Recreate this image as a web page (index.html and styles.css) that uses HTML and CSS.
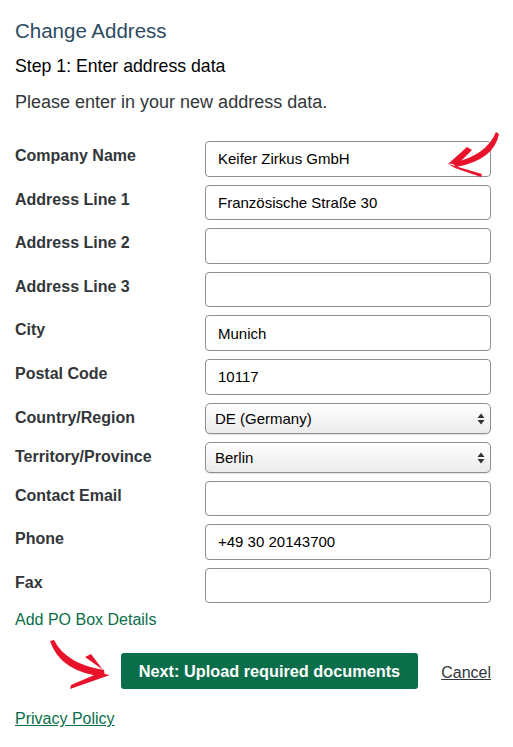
FILE: index.html
```html
<!DOCTYPE html>
<html lang="en">
<head>
    <meta charset="UTF-8">
    <meta name="viewport" content="width=device-width, initial-scale=1.0">
    <title>Change Address</title>
    <link rel="stylesheet" href="styles.css">
</head>
<body>
<div class="page">

    <h1 class="title">Change Address</h1>
    <p class="step">Step 1: Enter address data</p>
    <p class="intro">Please enter in your new address data.</p>

    <!-- Address form -->
    <form class="address-form">
        <label class="field-label" for="company">Company Name</label>
        <input class="text-input" id="company" type="text" value="Keifer Zirkus GmbH">

        <label class="field-label" for="line1">Address Line 1</label>
        <input class="text-input" id="line1" type="text" value="Französische Straße 30">

        <label class="field-label" for="line2">Address Line 2</label>
        <input class="text-input" id="line2" type="text">

        <label class="field-label" for="line3">Address Line 3</label>
        <input class="text-input" id="line3" type="text">

        <label class="field-label" for="city">City</label>
        <input class="text-input" id="city" type="text" value="Munich">

        <label class="field-label" for="postal">Postal Code</label>
        <input class="text-input" id="postal" type="text" value="10117">

        <label class="field-label" for="country">Country/Region</label>
        <div class="select-wrap">
            <select class="select-input" id="country">
                <option>DE (Germany)</option>
            </select>
            <svg class="select-arrows" width="8" height="12" viewBox="0 0 8 12">
                <path d="M4 0.5 L7.5 5 L0.5 5 Z M4 11.5 L7.5 7 L0.5 7 Z" fill="#333"/>
            </svg>
        </div>

        <label class="field-label" for="territory">Territory/Province</label>
        <div class="select-wrap">
            <select class="select-input" id="territory">
                <option>Berlin</option>
            </select>
            <svg class="select-arrows" width="8" height="12" viewBox="0 0 8 12">
                <path d="M4 0.5 L7.5 5 L0.5 5 Z M4 11.5 L7.5 7 L0.5 7 Z" fill="#333"/>
            </svg>
        </div>

        <label class="field-label" for="email">Contact Email</label>
        <input class="text-input" id="email" type="text">

        <label class="field-label" for="phone">Phone</label>
        <input class="text-input" id="phone" type="text" value="+49 30 20143700">

        <label class="field-label" for="fax">Fax</label>
        <input class="text-input" id="fax" type="text">
    </form>

    <a class="link po-link" href="#">Add PO Box Details</a>

    <div class="actions">
        <button class="btn-next" type="button">Next: Upload required documents</button>
        <a class="cancel-link" href="#">Cancel</a>
    </div>

    <a class="link privacy-link" href="#">Privacy Policy</a>

    <!-- Red hand-drawn arrows (annotation overlay) -->
    <svg class="annotations" width="513" height="747" viewBox="0 0 513 747">
        <g fill="#e8132b">
            <path d="M496,132 L499,134 Q494,160 456,167 L452,163 Q486,156 496,132 Z"/>
            <path d="M448,164 L467,147 L472,150 L459,163 Z"/>
            <path d="M448,164 L482,174 L481,177 L455,168 Z"/>

            <path d="M50,641 L54,640 Q66,664 104,670 L105,677 Q60,672 50,641 Z"/>
            <path d="M110,675 L85,657 L91,654 L103,670 Z"/>
            <path d="M110,675 L70,689 L71,685 L99,673 Z"/>
        </g>
    </svg>
</div>
</body>
</html>
```

FILE: styles.css
```css
body {
    margin: 0;
    padding: 0;
    background-color: #fff;
    font-family: "Liberation Sans", Arial, sans-serif;
    color: #32363a;
}

.page {
    position: relative;
    padding: 1px 22px 0 15px;
}

.title {
    margin: 18px 0 0;
    font-size: 20.5px;
    line-height: 24px;
    font-weight: normal;
    color: #2b4b62;
}

.step {
    margin: 12px 0 0;
    font-size: 17.7px;
    line-height: 22px;
    color: #000;
}

.intro {
    margin: 14px 0 0;
    font-size: 18px;
    line-height: 22px;
    color: #32363a;
}

.address-form {
    display: grid;
    grid-template-columns: 190px 1fr;
    row-gap: 8px;
    margin-top: 28px;
}

.field-label {
    padding-top: 5px;
    font-size: 16px;
    line-height: 20px;
    font-weight: bold;
    color: #32363a;
}

.text-input {
    box-sizing: border-box;
    width: 100%;
    height: 35.6px;
    margin: 0;
    padding: 0 12px;
    border: 1px solid #8f8f8f;
    border-radius: 4px;
    font-family: "Liberation Sans", Arial, sans-serif;
    font-size: 15px;
    color: #000;
    background-color: #fff;
}

.select-wrap {
    position: relative;
}

.select-input {
    box-sizing: border-box;
    width: 100%;
    height: 31px;
    margin: 0;
    padding: 0 9px;
    border: 1px solid #8f8f8f;
    border-radius: 5px;
    appearance: none;
    -webkit-appearance: none;
    background: linear-gradient(#ffffff, #ebebeb);
    box-shadow: 0 1px 1px rgba(0, 0, 0, 0.12);
    font-family: "Liberation Sans", Arial, sans-serif;
    font-size: 15px;
    color: #000;
}

.select-arrows {
    position: absolute;
    right: 6px;
    top: 10px;
    pointer-events: none;
}

.link {
    display: block;
    width: max-content;
    font-size: 16px;
    line-height: 20px;
    color: #0a6e4a;
}

.po-link {
    margin-top: 7px;
    text-decoration: none;
}

.actions {
    display: flex;
    justify-content: flex-end;
    align-items: center;
    gap: 23px;
    margin-top: 23px;
}

.btn-next {
    height: 36px;
    padding: 0 18px;
    border: none;
    border-radius: 3px;
    background-color: #0b6e4b;
    color: #fff;
    font-family: "Liberation Sans", Arial, sans-serif;
    font-size: 16.3px;
    font-weight: bold;
    cursor: pointer;
}

.cancel-link {
    font-size: 16px;
    color: #32363a;
    padding-top: 3px;
}

.privacy-link {
    margin-top: 20px;
    text-decoration: underline;
}

.annotations {
    position: absolute;
    left: 0;
    top: 0;
    pointer-events: none;
}
```
